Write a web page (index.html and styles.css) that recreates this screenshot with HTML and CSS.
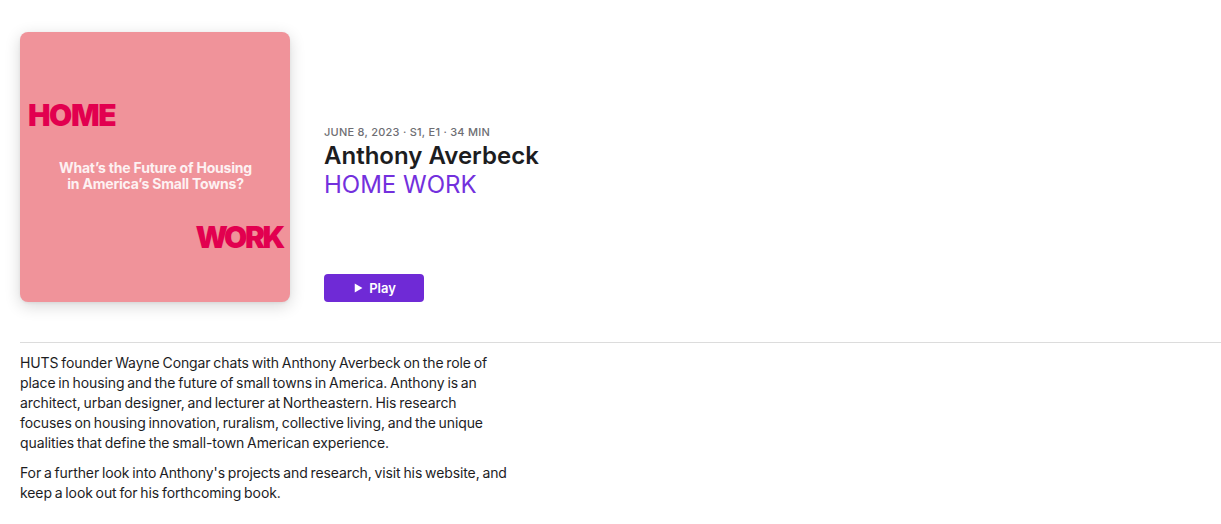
FILE: index.html
```html
<!DOCTYPE html>
<html lang="en">
<head>
<meta charset="utf-8">
<title>Anthony Averbeck - HOME WORK</title>
<link rel="stylesheet" href="styles.css">
</head>
<body>
<main class="page">
  <section class="header">
    <div class="artwork">
      <div class="art-home">HOME</div>
      <div class="art-question">What’s the Future of Housing<br>in America’s Small Towns?</div>
      <div class="art-work">WORK</div>
    </div>
    <div class="info">
      <div class="meta">JUNE 8, 2023 · S1, E1 · 34 MIN</div>
      <h1 class="title">Anthony Averbeck</h1>
      <div class="show">HOME WORK</div>
      <button class="play">
        <svg class="play-icon" viewBox="0 0 10 11" width="9" height="10"><path d="M0.8 0.5 L9.4 5.5 L0.8 10.5 Z" fill="#fff"/></svg>
        <span>Play</span>
      </button>
    </div>
  </section>
  <hr class="divider">
  <section class="description">
    <p>HUTS founder Wayne Congar chats with Anthony Averbeck on the role of place in housing and the future of small towns in America. Anthony is an architect, urban designer, and lecturer at Northeastern. His research focuses on housing innovation, ruralism, collective living, and the unique qualities that define the small-town American experience.</p>
    <p>For a further look into Anthony's projects and research, visit his website, and keep a look out for his forthcoming book.</p>
  </section>
</main>
</body>
</html>
```

FILE: styles.css
```css
* { box-sizing: border-box; }
html, body { margin: 0; padding: 0; background: #fff; }
body {
  font-family: Inter, "Liberation Sans", Arial, sans-serif;
  color: #1d1d1f;
  -webkit-font-smoothing: antialiased;
}
.page {
  padding: 32px 0 0 20px;
}
.header {
  display: flex;
  gap: 34px;
}
.artwork {
  width: 270px;
  height: 270px;
  flex: none;
  background: #f0939a;
  border-radius: 8px;
  box-shadow: 0 4px 16px rgba(0, 0, 0, 0.16), 0 1px 3px rgba(0, 0, 0, 0.06);
  display: flex;
  flex-direction: column;
  padding: 0 5px 0 8px;
  overflow: hidden;
}
.art-home, .art-work {
  font-family: Inter, "Liberation Sans", sans-serif;
  font-weight: 900;
  font-size: 30px;
  line-height: 30px;
  letter-spacing: -1.4px;
  color: #e2004f;
}
.art-home {
  margin-top: 68px;
}
.art-question {
  margin-top: 30px;
  text-align: center;
  color: #fdf1f2;
  font-weight: 700;
  font-size: 14px;
  line-height: 16px;
  letter-spacing: -0.2px;
  padding-right: 2px;
}
.art-work {
  margin-top: 30px;
  text-align: right;
  letter-spacing: -2.4px;
  padding-right: 2px;
}
.info {
  display: flex;
  flex-direction: column;
  align-items: flex-start;
  height: 270px;
  padding-top: 93px;
}
.meta {
  font-size: 11px;
  line-height: 14px;
  font-weight: 500;
  color: #6e6e73;
  letter-spacing: 0.25px;
}
.title {
  margin: 2px 0 0;
  font-size: 24px;
  line-height: 29px;
  font-weight: 600;
  color: #1d1d1f;
  letter-spacing: 0;
}
.show {
  font-size: 24px;
  line-height: 29px;
  font-weight: 400;
  color: #7330dd;
  letter-spacing: 0;
}
.play {
  margin-top: auto;
  width: 100px;
  height: 28px;
  border: none;
  border-radius: 4px;
  background: #6f2ad6;
  color: #fff;
  font-family: inherit;
  font-size: 13px;
  font-weight: 600;
  display: flex;
  align-items: center;
  justify-content: center;
  gap: 6px;
  padding: 0 0 0 2px;
  cursor: pointer;
}
.play-icon { display: block; }
.divider {
  margin: 40px 0 0;
  border: none;
  border-top: 1px solid #dcdcdc;
  height: 0;
}
.description {
  max-width: 489px;
  padding-top: 10px;
  font-size: 14px;
  line-height: 20px;
  letter-spacing: -0.1px;
  word-spacing: -1px;
  color: #1d1d1f;
}
.description p {
  margin: 0 0 10px;
}
```
